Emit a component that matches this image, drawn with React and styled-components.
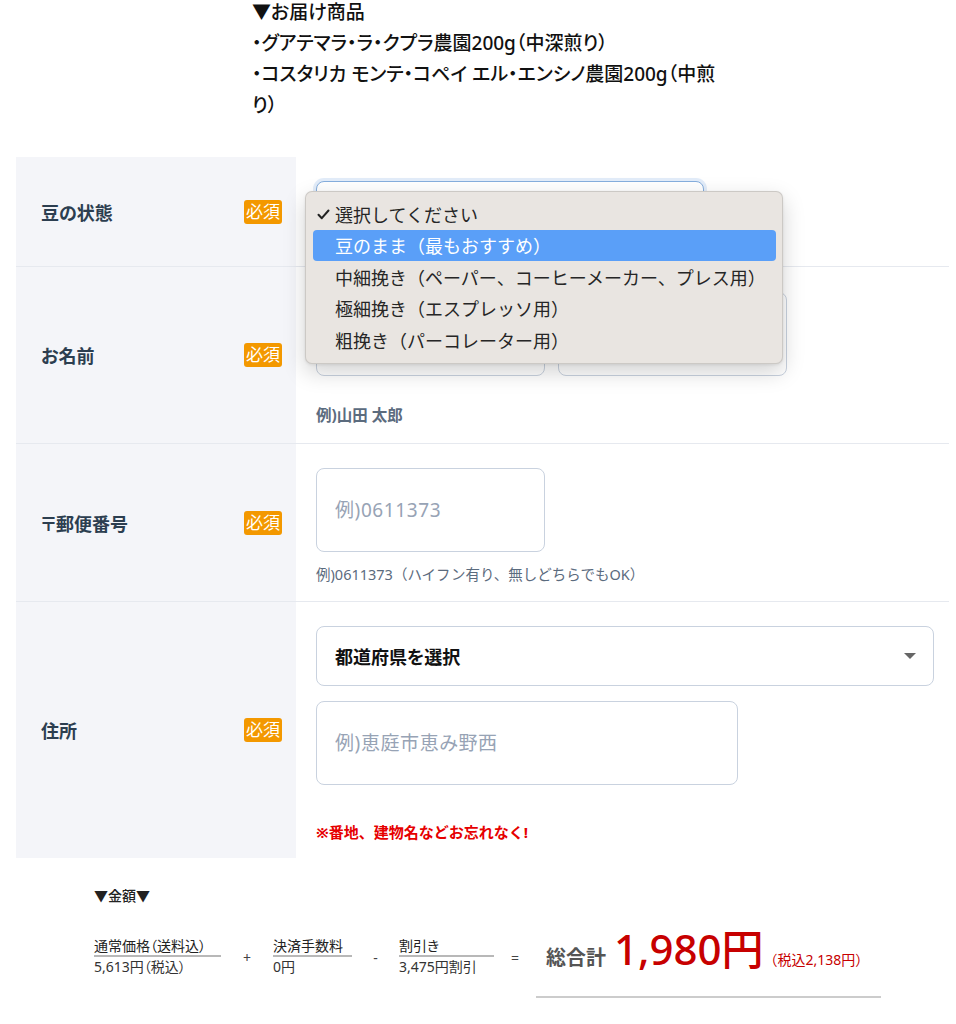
import React from "react";
import styled, { createGlobalStyle } from "styled-components";

const GlobalStyle = createGlobalStyle`
  html, body { margin: 0; padding: 0; background: #fff; }
  body {
    font-family: "Noto Sans", "Noto Sans CJK JP", sans-serif;
    color: #222;
    font-feature-settings: "palt";
  }
  * { box-sizing: border-box; }
`;

const Page = styled.div`
  padding: 0 7px 30px 16px;
`;

const Intro = styled.div`
  margin: -3px 0 0 236px;
  width: 474px;
  font-size: 19px;
  line-height: 31px;
  font-weight: 500;
  color: #111;
`;

const Form = styled.div`
  margin-top: 36px;
`;

const Row = styled.div`
  display: grid;
  grid-template-columns: 280px 1fr;
  border-bottom: ${(p) => (p.$last ? "none" : "1px solid #e6e9ef")};
`;

const LabelCell = styled.div`
  background: #f4f5f9;
  display: flex;
  align-items: center;
  justify-content: space-between;
  padding: 0 14px 0 25px;
`;

const Label = styled.span`
  font-size: 18px;
  font-weight: 700;
  color: #2c3e50;
`;

const Badge = styled.span`
  background: #f39800;
  color: #fff;
  font-size: 17px;
  line-height: 24px;
  padding: 0 2px;
  border-radius: 3px;
`;

const FieldCell = styled.div`
  position: relative;
  padding: ${(p) => p.$pad};
  display: flex;
  flex-direction: column;
  align-items: flex-start;
`;

const SelectBox = styled.div`
  width: ${(p) => p.$w}px;
  height: 60px;
  border: 1px solid ${(p) => (p.$focus ? "#86aedd" : "#c9d2df")};
  box-shadow: ${(p) => (p.$focus ? "0 0 0 3px rgba(110,160,225,0.2)" : "none")};
  border-radius: 8px;
  display: flex;
  align-items: center;
  justify-content: space-between;
  padding: 0 17px 0 18px;
  font-size: 18px;
  font-weight: 700;
  color: #111;
  background: #fff;
`;

const Caret = styled.span`
  width: 0;
  height: 0;
  border-left: 6px solid transparent;
  border-right: 6px solid transparent;
  border-top: 6px solid #666;
`;

const TextInput = styled.input`
  width: ${(p) => p.$w}px;
  height: 84px;
  border: 1px solid #c9d2df;
  border-radius: 8px;
  padding: 0 18px;
  font-family: inherit;
  font-feature-settings: "palt";
  font-size: 19px;
  letter-spacing: 0.6px;
  color: #222;
  background: #fff;
  outline: none;
  &::placeholder {
    color: #97a3b5;
  }
`;

const InputRow = styled.div`
  display: flex;
  gap: 13px;
`;

const Help = styled.div`
  margin-top: ${(p) => p.$mt}px;
  font-size: ${(p) => (p.$bold ? "15.5px" : "14.5px")};
  line-height: 20px;
  font-weight: ${(p) => (p.$bold ? 700 : 400)};
  color: #5b6b7e;
  font-feature-settings: normal;
`;

const Note = styled.div`
  margin-top: ${(p) => p.$mt}px;
  font-size: 15px;
  line-height: 20px;
  font-weight: 700;
  color: #e60000;
  font-feature-settings: normal;
`;

const Gap = styled.div`
  height: ${(p) => p.$h}px;
`;

const Menu = styled.div`
  position: absolute;
  left: 9px;
  top: 34px;
  width: 478px;
  padding: 6px 6px 7px 7px;
  background: #e9e5e1;
  border: 1px solid rgba(0, 0, 0, 0.12);
  border-radius: 7px;
  box-shadow: 0 8px 22px rgba(0, 0, 0, 0.18), 0 1px 3px rgba(0, 0, 0, 0.08);
  z-index: 10;
  font-family: "Noto Sans CJK JP", sans-serif;
  font-feature-settings: normal;
`;

const MenuItem = styled.div`
  position: relative;
  height: 31.5px;
  display: flex;
  align-items: center;
  padding-left: 22px;
  border-radius: 4px;
  font-size: 18px;
  color: ${(p) => (p.$active ? "#fff" : "#262626")};
  background: ${(p) => (p.$active ? "#5a9ff8" : "transparent")};
`;

const Check = styled.svg`
  position: absolute;
  left: 4px;
  top: 11px;
`;

const PriceSection = styled.div`
  margin: 28px 0 0 78px;
`;

const PriceTitle = styled.div`
  font-size: 14px;
  line-height: 20px;
  font-weight: 500;
  color: #222;
`;

const Equation = styled.div`
  display: flex;
  align-items: flex-start;
  margin-top: 31px;
`;

const Frac = styled.div`
  width: ${(p) => p.$w}px;
  display: flex;
  flex-direction: column;
`;

const FracLabel = styled.div`
  font-size: 14px;
  line-height: 18px;
  color: #222;
  white-space: nowrap;
  border-bottom: 2px solid #b8b8b8;
`;

const FracValue = styled.div`
  font-size: 14px;
  line-height: 20px;
  color: #333;
  white-space: nowrap;
`;

const Op = styled.div`
  width: ${(p) => p.$w}px;
  margin-top: 11px;
  text-align: center;
  font-size: 14px;
  line-height: 20px;
  color: #444;
`;

const Total = styled.div`
  width: 345px;
  margin-top: -9px;
  display: flex;
  align-items: baseline;
  padding: 0 0 25px 10px;
  border-bottom: 2px solid #ccc;
  white-space: nowrap;
`;

const TotalLabel = styled.span`
  font-size: 20px;
  font-weight: 700;
  color: #555;
  margin-right: 8px;
`;

const TotalAmount = styled.span`
  font-size: 42px;
  line-height: 1;
  font-weight: 500;
  color: #c70000;
`;

const TotalTax = styled.span`
  font-size: 14px;
  color: #c70000;
  font-feature-settings: normal;
`;

const options = [
  "選択してください",
  "豆のまま（最もおすすめ）",
  "中細挽き（ペーパー、コーヒーメーカー、プレス用）",
  "極細挽き（エスプレッソ用）",
  "粗挽き（パーコレーター用）",
];

function FieldLabel({ children }) {
  return (
    <LabelCell>
      <Label>{children}</Label>
      <Badge>必須</Badge>
    </LabelCell>
  );
}

export default function App() {
  return (
    <Page>
      <GlobalStyle />
      <Intro>
        ▼お届け商品
        <br />
        ・グアテマラ・ラ・クプラ農園200g（中深煎り）
        <br />
        ・コスタリカ モンテ・コペイ エル・エンシノ農園200g（中煎り）
      </Intro>

      <Form>
        <Row>
          <FieldLabel>豆の状態</FieldLabel>
          <FieldCell $pad="24px 15px 25px 20px">
            <SelectBox $w={388} $focus />
            <Menu>
              {options.map((o, i) => (
                <MenuItem key={o} $active={i === 1}>
                  {i === 0 && (
                    <Check width="13" height="11" viewBox="0 0 13 11">
                      <path
                        d="M1.5 5.8 L4.8 9.2 L11.5 1.5"
                        fill="none"
                        stroke="#222"
                        strokeWidth="2"
                        strokeLinecap="round"
                        strokeLinejoin="round"
                      />
                    </Check>
                  )}
                  {o}
                </MenuItem>
              ))}
            </Menu>
          </FieldCell>
        </Row>

        <Row>
          <FieldLabel>お名前</FieldLabel>
          <FieldCell $pad="25px 15px 18px 20px">
            <InputRow>
              <TextInput $w={229} placeholder="例)山田" />
              <TextInput $w={229} placeholder="例)太郎" />
            </InputRow>
            <Help $mt={29} $bold>
              例)山田 太郎
            </Help>
          </FieldCell>
        </Row>

        <Row>
          <FieldLabel>〒郵便番号</FieldLabel>
          <FieldCell $pad="24px 15px 17px 20px">
            <TextInput $w={229} placeholder="例)0611373" />
            <Help $mt={12}>例)0611373（ハイフン有り、無しどちらでもOK）</Help>
          </FieldCell>
        </Row>

        <Row $last>
          <FieldLabel>住所</FieldLabel>
          <FieldCell $pad="24px 15px 16px 20px">
            <SelectBox $w={618}>
              都道府県を選択
              <Caret />
            </SelectBox>
            <Gap $h={15} />
            <TextInput $w={422} placeholder="例)恵庭市恵み野西" />
            <Note $mt={37}>※番地、建物名などお忘れなく!</Note>
          </FieldCell>
        </Row>
      </Form>

      <PriceSection>
        <PriceTitle>▼金額▼</PriceTitle>
        <Equation>
          <Frac $w={127}>
            <FracLabel>通常価格（送料込）</FracLabel>
            <FracValue>5,613円（税込）</FracValue>
          </Frac>
          <Op $w={52}>+</Op>
          <Frac $w={79}>
            <FracLabel>決済手数料</FracLabel>
            <FracValue>0円</FracValue>
          </Frac>
          <Op $w={47}>-</Op>
          <Frac $w={95}>
            <FracLabel>割引き</FracLabel>
            <FracValue>3,475円割引</FracValue>
          </Frac>
          <Op $w={42}>=</Op>
          <Total>
            <TotalLabel>総合計</TotalLabel>
            <TotalAmount>1,980円</TotalAmount>
            <TotalTax>（税込2,138円）</TotalTax>
          </Total>
        </Equation>
      </PriceSection>
    </Page>
  );
}
